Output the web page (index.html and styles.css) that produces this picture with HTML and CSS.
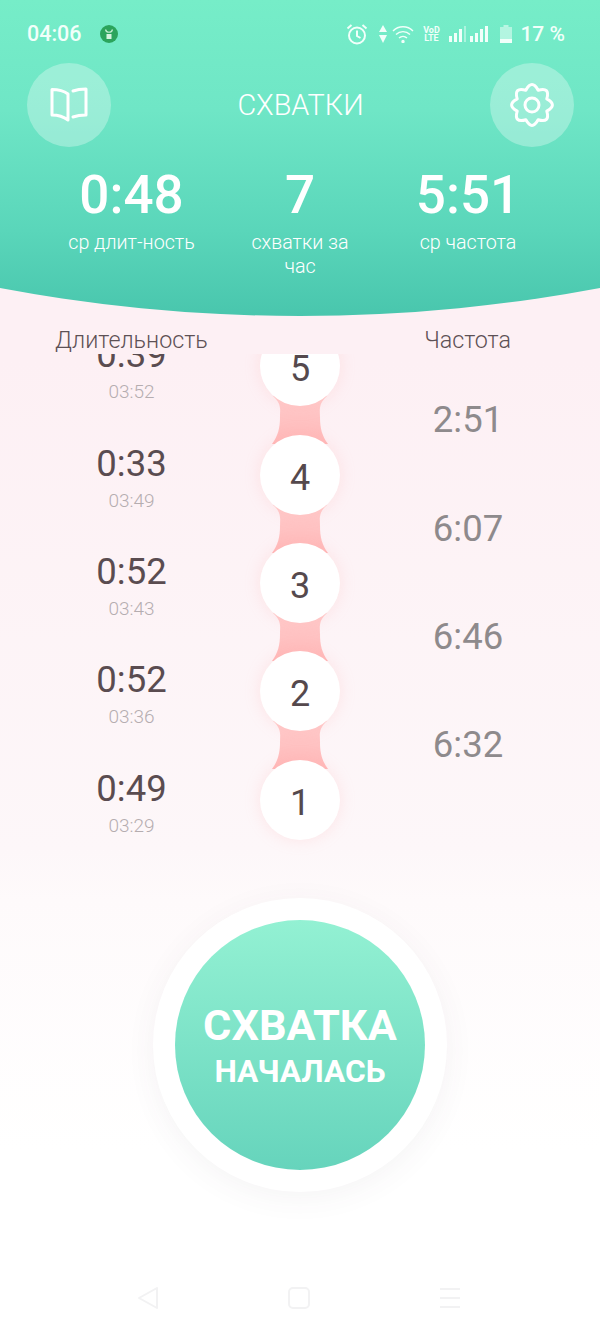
FILE: index.html
```html
<!DOCTYPE html>
<html lang="ru">
<head>
    <meta charset="UTF-8">
    <meta name="viewport" content="width=device-width, initial-scale=1.0">
    <title>Схватки</title>
    <link rel="stylesheet" href="styles.css">
</head>
<body>
    <header class="top">
        <div class="status-bar">
            <span class="clock">04:06</span>
            <svg class="badge" width="18" height="18" viewBox="0 0 18 18">
                <circle cx="9" cy="9" r="9" fill="#2ba45c"/>
                <path d="M5.5 4.5a3.6 3.6 0 0 0 7 0" fill="none" stroke="#bfeccf" stroke-width="1.2"/>
                <rect x="6.5" y="9" width="5" height="5" fill="#d5f3df"/>
            </svg>
            <div class="status-icons">
                <svg class="alarm" width="22" height="22" viewBox="0 0 22 22" fill="none" stroke="#f1fffa" stroke-width="2">
                    <circle cx="11" cy="12.5" r="8"/>
                    <path d="M11 7.5v5.5l3.5 2M1.500 5.500l4-3.500M20.500 5.500l-4-3.500"/>
                </svg>
                <svg class="arrows" width="8" height="20" viewBox="0 0 8 20" fill="#f1fffa">
                    <path d="M4 1l4 7H0zM0 11h8l-4 8z"/>
                </svg>
                <svg width="22" height="18" viewBox="0 0 22 18" fill="none" stroke="#f1fffa" stroke-width="1.400">
                    <path d="M1 6a14 14 0 0 1 20 0M4 9.500a10 10 0 0 1 14 0M7 13a6 6 0 0 1 8 0"/>
                    <circle cx="11" cy="16.500" r="1" fill="#f1fffa"/>
                </svg>
                <span class="volte">VoD<br>LTE</span>
                <svg width="41" height="18" viewBox="0 0 41 18" fill="#f1fffa">
                    <path d="M0 11h3v6H0zM5 8h3v9H5zM10 4h3v13h-3z"/>
                    <path d="M15 1h2v16h-2z" opacity=".45"/>
                    <path d="M21 11h3v6h-3zM26 8h3v9h-3zM31 4h3v13h-3zM36 1h3v16h-3z"/>
                </svg>
                <svg class="battery" width="12" height="18" viewBox="0 0 12 18" fill="#f1fffa">
                    <path d="M3.500 0h5v2h-5z" opacity=".55"/>
                    <path d="M0 2h12v12H0z" opacity=".5"/>
                    <path d="M0 14h12v4H0z"/>
                </svg>
                <span class="percent">17 %</span>
            </div>
        </div>
        <div class="title-row">
            <button class="round-btn">
                <svg width="38" height="36" viewBox="0 0 38 36" fill="none" stroke="#fff" stroke-width="3" stroke-linejoin="round" stroke-linecap="round">
                    <path d="M2 2.500c6 0 12 1.500 16 4.500v26c-4-3-10-5-16-5z"/>
                    <path d="M23 4c4-1.500 8-2 13-2v26c-5 0-9 .5-13 2"/>
                </svg>
            </button>
            <h1 class="title">СХВАТКИ</h1>
            <button class="round-btn">
                <svg width="44" height="44" viewBox="0 0 44 44" fill="none" stroke="#fff" stroke-width="3" stroke-linejoin="round">
                    <path d="M36.780 15.880Q48 22 36.780 28.120Q40.380 40.380 28.120 36.780Q22 48 15.880 36.780Q3.620 40.380 7.220 28.120Q-4 22 7.220 15.880Q3.620 3.620 15.880 7.220Q22 -4 28.120 7.220Q40.380 3.620 36.780 15.880Z"/>
                    <circle cx="22" cy="22" r="7"/>
                </svg>
            </button>
        </div>
        <div class="stats">
            <div class="stat">
                <div class="stat-value">0:48</div>
                <div class="stat-label">ср длит-ность</div>
            </div>
            <div class="stat">
                <div class="stat-value">7</div>
                <div class="stat-label">схватки за<br>час</div>
            </div>
            <div class="stat">
                <div class="stat-value">5:51</div>
                <div class="stat-label">ср частота</div>
            </div>
        </div>
    </header>

    <div class="columns">
        <span>Длительность</span>
        <span>Частота</span>
    </div>

    <div class="list">
        <div class="row">
            <div class="duration"><div class="time">0:39</div><div class="start">03:52</div></div>
            <div class="middle"><div class="num">5</div><svg class="link" width="60" height="48" viewBox="0 0 60 48"><defs><linearGradient id="linkFill" x1="0" y1="0" x2="0" y2="1"><stop offset="0" stop-color="#ffcccc"/><stop offset="1" stop-color="#ffb8b8"/></linearGradient></defs><path fill="url(#linkFill)" d="M3 0H57C48 8 50 14 50 21C50 32 52 40 58 48H2C8 40 10 32 10 21C10 14 12 8 3 0Z"/></svg></div>
            <div class="freq">2:51</div>
        </div>
        <div class="row">
            <div class="duration"><div class="time">0:33</div><div class="start">03:49</div></div>
            <div class="middle"><div class="num">4</div><svg class="link" width="60" height="48" viewBox="0 0 60 48"><path fill="url(#linkFill)" d="M3 0H57C48 8 50 14 50 21C50 32 52 40 58 48H2C8 40 10 32 10 21C10 14 12 8 3 0Z"/></svg></div>
            <div class="freq">6:07</div>
        </div>
        <div class="row">
            <div class="duration"><div class="time">0:52</div><div class="start">03:43</div></div>
            <div class="middle"><div class="num">3</div><svg class="link" width="60" height="48" viewBox="0 0 60 48"><path fill="url(#linkFill)" d="M3 0H57C48 8 50 14 50 21C50 32 52 40 58 48H2C8 40 10 32 10 21C10 14 12 8 3 0Z"/></svg></div>
            <div class="freq">6:46</div>
        </div>
        <div class="row">
            <div class="duration"><div class="time">0:52</div><div class="start">03:36</div></div>
            <div class="middle"><div class="num">2</div><svg class="link" width="60" height="48" viewBox="0 0 60 48"><path fill="url(#linkFill)" d="M3 0H57C48 8 50 14 50 21C50 32 52 40 58 48H2C8 40 10 32 10 21C10 14 12 8 3 0Z"/></svg></div>
            <div class="freq">6:32</div>
        </div>
        <div class="row">
            <div class="duration"><div class="time">0:49</div><div class="start">03:29</div></div>
            <div class="middle"><div class="num">1</div></div>
            <div class="freq"></div>
        </div>
    </div>

    <div class="action">
        <div class="action-ring">
            <button class="action-btn">
                <span class="action-main">СХВАТКА</span>
                <span class="action-sub">НАЧАЛАСЬ</span>
            </button>
        </div>
    </div>

    <nav class="nav-bar">
        <svg width="24" height="24" viewBox="0 0 24 24" fill="none" stroke="#f2f2f3" stroke-width="2" stroke-linejoin="round">
            <path d="M3 12L21 2v20z"/>
        </svg>
        <svg width="24" height="24" viewBox="0 0 24 24" fill="none" stroke="#f2f2f3" stroke-width="2">
            <rect x="2" y="2" width="20" height="20" rx="4"/>
        </svg>
        <svg width="24" height="24" viewBox="0 0 24 24" fill="none" stroke="#f2f2f3" stroke-width="2">
            <path d="M2 3h20M2 12h20M2 21h20"/>
        </svg>
    </nav>
</body>
</html>
```

FILE: styles.css
```css
* {
    box-sizing: border-box;
}
html, body {
    height: 100%;
}
body {
    margin: 0;
    height: 1332px;
    overflow: hidden;
    display: flex;
    flex-direction: column;
    font-family: Roboto, "Liberation Sans", sans-serif;
    background: linear-gradient(#fdf0f4 0, #fdf0f4 360px, #fdf7f9 850px, #fefafb 900px, #ffffff 1150px);
}
.top {
    height: 316px;
    flex-shrink: 0;
    color: #fff;
    background: linear-gradient(#76edc8 0, #6fe6c6 110px, #5ad6ba 230px, #49c6ad 316px);
    clip-path: circle(1621px at 50% -1305px);
}
.status-bar {
    height: 63px;
    display: flex;
    align-items: center;
    padding: 4px 35px 0 27px;
    color: #f1fffa;
}
.clock {
    font-size: 21.5px;
    font-weight: 500;
    width: 72px;
}
.badge {
    margin-left: 1px;
}
.status-icons {
    margin-left: auto;
    display: flex;
    align-items: center;
    gap: 5px;
}
.alarm {
    margin-right: 4px;
}
.arrows {
    margin-left: 2px;
}
.volte {
    font-size: 9px;
    line-height: 8px;
    font-weight: 700;
    width: 18px;
    margin: 0 4px 0 3px;
    text-align: center;
}
.battery {
    margin-left: 5px;
}
.percent {
    font-size: 21px;
    font-weight: 500;
    margin-left: 3px;
}
.title-row {
    display: flex;
    align-items: center;
    justify-content: space-between;
    padding: 0 26px 0 27px;
}
.round-btn {
    width: 84px;
    height: 84px;
    border: none;
    border-radius: 50%;
    padding: 0;
    background: rgba(255, 255, 255, 0.3);
    display: flex;
    align-items: center;
    justify-content: center;
}
.title {
    margin: 0;
    font-size: 28.8px;
    font-weight: 300;
}
.stats {
    display: grid;
    grid-template-columns: 1fr 1fr 1fr;
    padding: 17px 0 0 0;
    text-align: center;
}
.stat:first-child {
    padding-left: 63px;
}
.stat:last-child {
    padding-right: 64px;
}
.stat-value {
    font-size: 53px;
    line-height: 62px;
    font-weight: 500;
    white-space: nowrap;
}
.stat-label {
    margin-top: 5px;
    font-size: 19.7px;
    line-height: 24px;
    font-weight: 300;
    white-space: nowrap;
}
.columns {
    height: 38px;
    display: flex;
    justify-content: space-between;
    align-items: flex-end;
    padding: 0 89px 0 55px;
    font-size: 23.3px;
    line-height: 28px;
    font-weight: 300;
    color: #5d5155;
}
.list {
    height: 514px;
    flex-shrink: 0;
    overflow: hidden;
    display: flex;
    flex-direction: column;
    justify-content: flex-end;
}
.row {
    height: 108.33px;
    flex-shrink: 0;
    display: grid;
    grid-template-columns: 1fr 80px 1fr;
    text-align: center;
}
.duration {
    padding: 8px 0 0 3px;
}
.time {
    font-size: 36.5px;
    line-height: 42px;
    color: #5a4c50;
}
.start {
    font-size: 19px;
    line-height: 32px;
    font-weight: 300;
    color: #b5adb0;
}
.middle {
    position: relative;
}
.num {
    position: relative;
    z-index: 1;
    width: 80px;
    height: 80px;
    border-radius: 50%;
    background: #fff;
    box-shadow: 0 0 16px rgba(255, 170, 170, 0.22);
    font-size: 36px;
    line-height: 86px;
    color: #55494d;
}
.link {
    position: absolute;
    left: 10px;
    top: 70px;
}
.freq {
    padding: 73px 4px 0 0;
    font-size: 36.5px;
    line-height: 42px;
    color: #8e8a8c;
}
.action {
    flex-shrink: 0;
    padding-top: 30px;
    display: flex;
    justify-content: center;
}
.action-ring {
    width: 294px;
    height: 294px;
    padding: 22px;
    border-radius: 50%;
    background: #fff;
    box-shadow: 0 6px 30px rgba(90, 70, 90, 0.06);
}
.action-btn {
    width: 250px;
    height: 250px;
    border: none;
    border-radius: 50%;
    padding: 4px 0 0;
    color: #fff;
    font-family: inherit;
    font-weight: 700;
    background: linear-gradient(#93f1d3, #66d4bc);
    display: flex;
    flex-direction: column;
    align-items: center;
    justify-content: center;
}
.action-main {
    font-size: 43.3px;
    line-height: 50px;
}
.action-sub {
    font-size: 31.7px;
    line-height: 42px;
}
.nav-bar {
    margin-top: auto;
    height: 68px;
    padding: 0 138px 0 136px;
    display: flex;
    align-items: center;
    justify-content: space-between;
}
```
